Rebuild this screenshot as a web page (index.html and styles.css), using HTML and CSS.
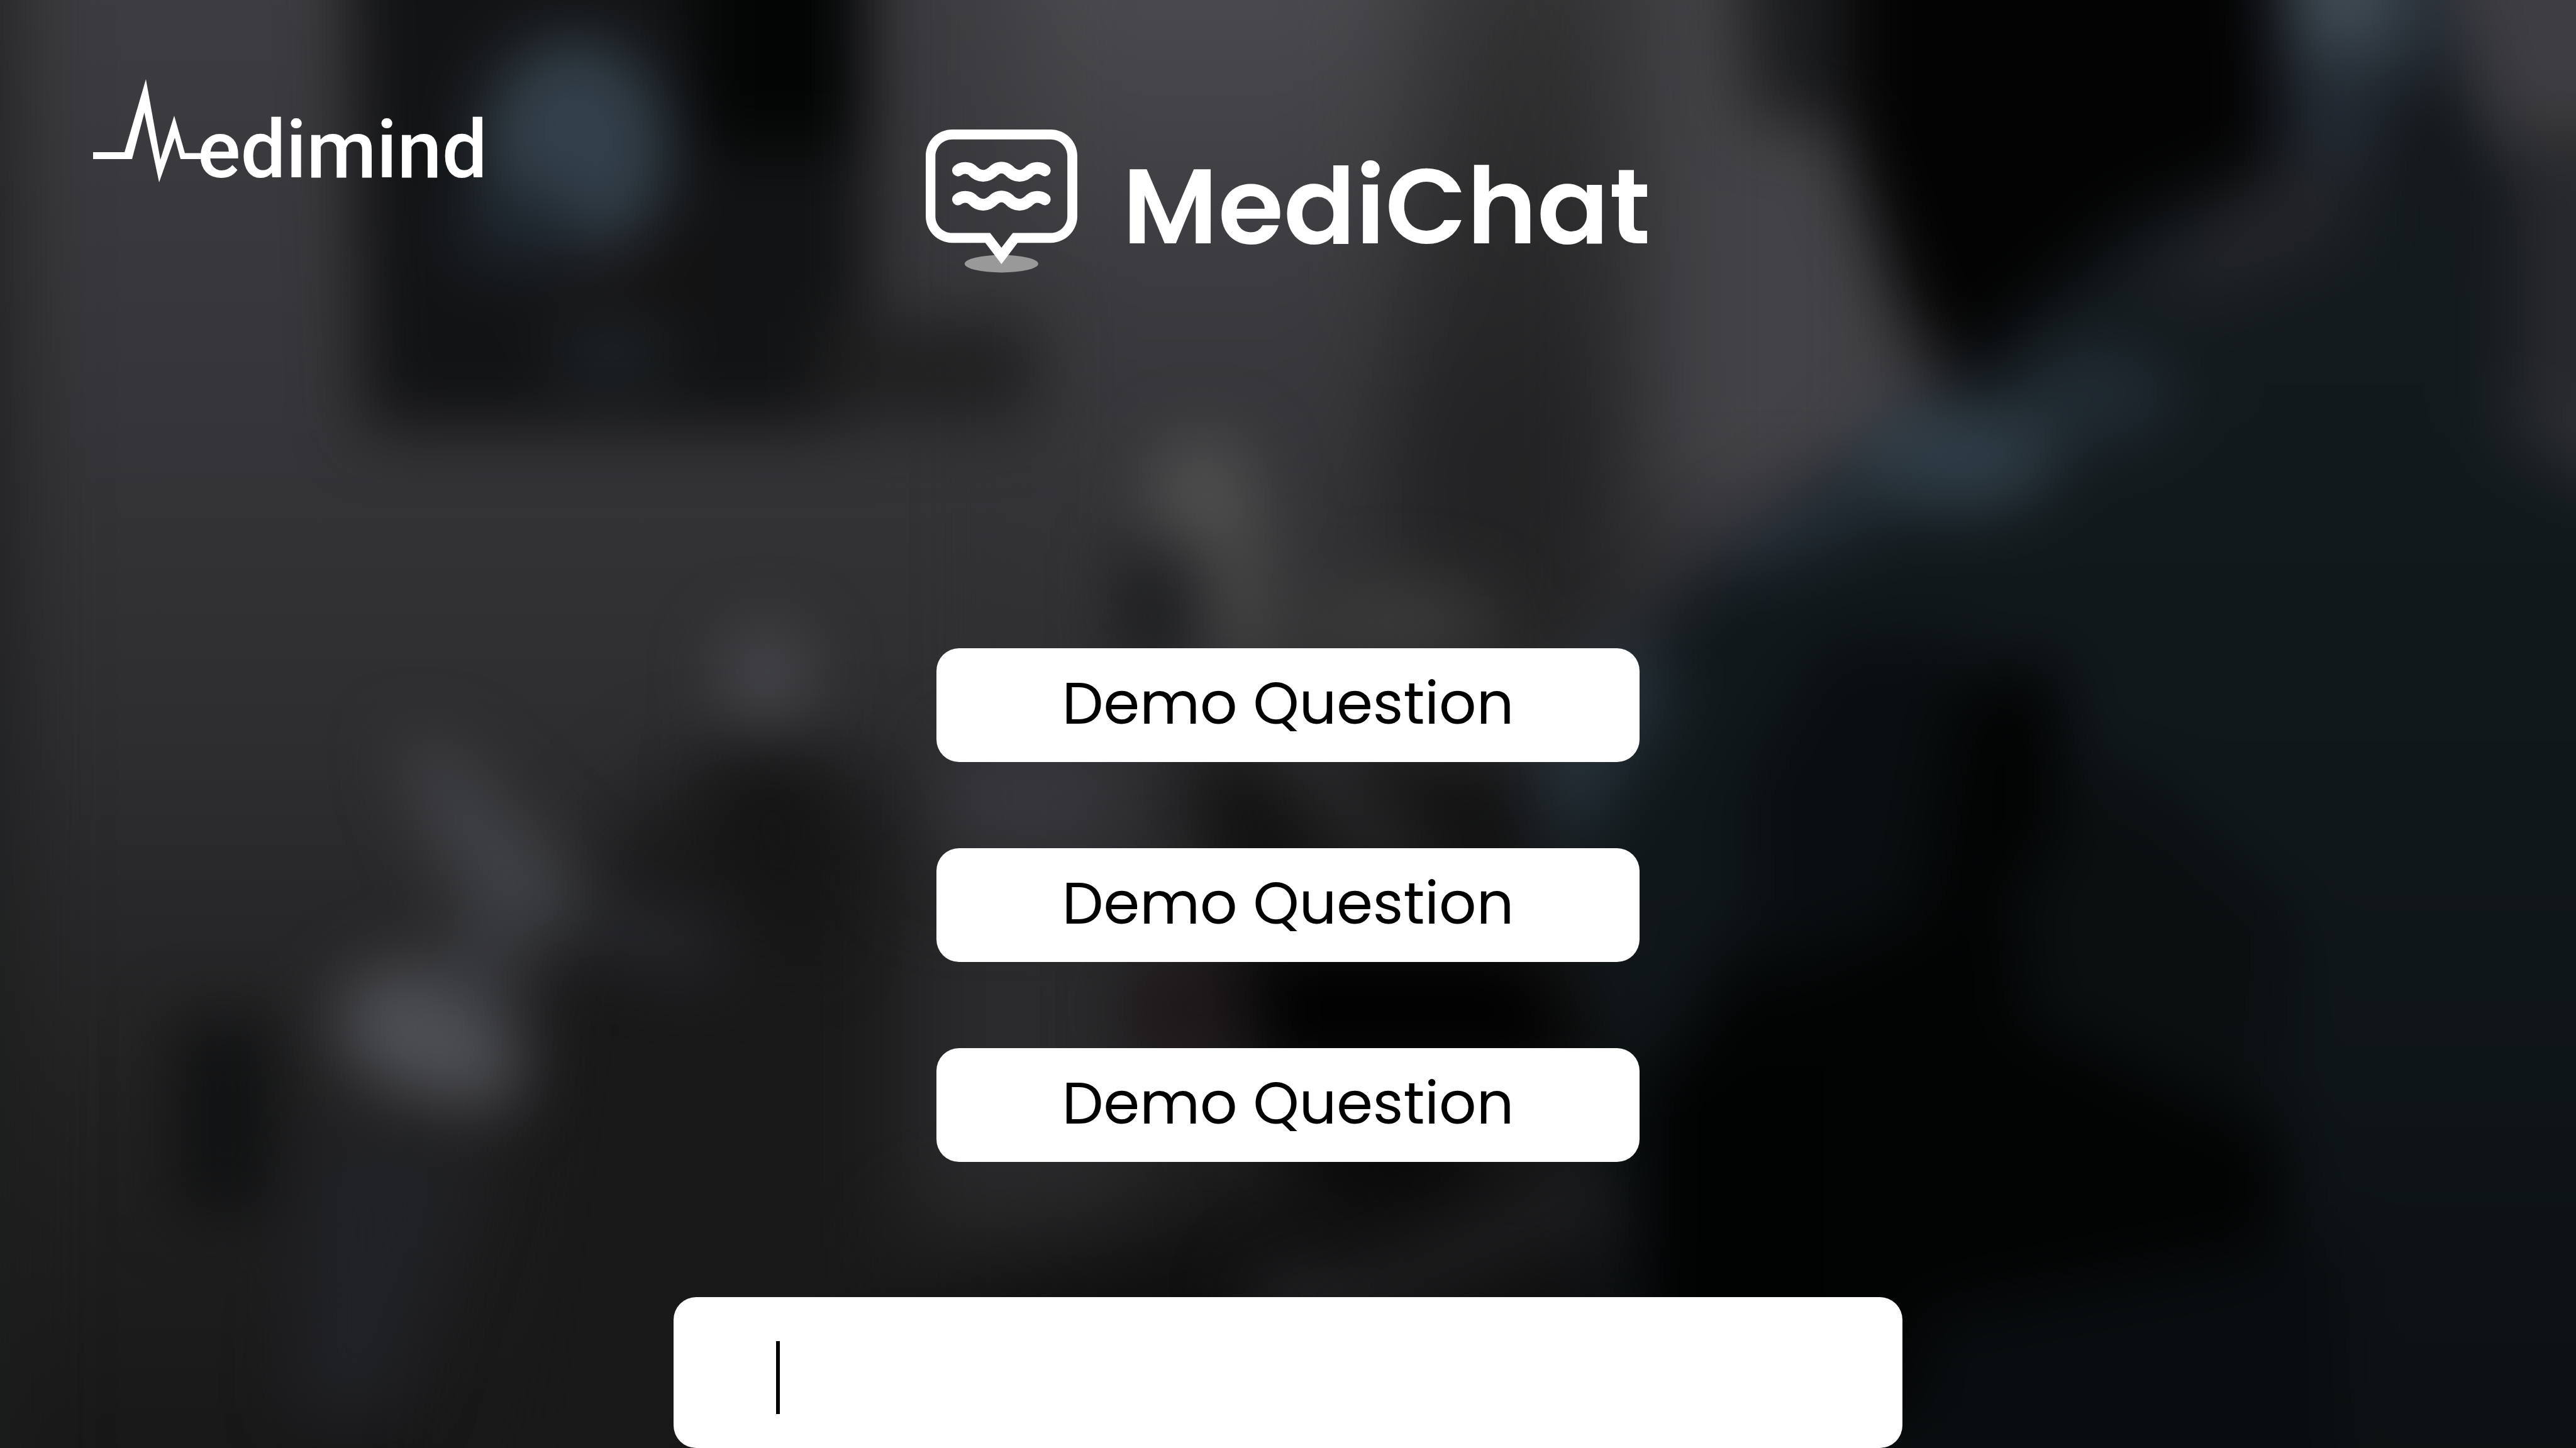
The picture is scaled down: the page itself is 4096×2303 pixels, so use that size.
FILE: index.html
```html
<!DOCTYPE html>
<html lang="en">
<head>
<meta charset="utf-8">
<meta name="viewport" content="width=device-width, initial-scale=1">
<title>MediChat</title>
<link rel="stylesheet" href="styles.css">
</head>
<body>
<svg class="backdrop" viewBox="0 0 1568 882" preserveAspectRatio="xMidYMid slice" aria-hidden="true">
  <defs>
    <linearGradient id="wall" x1="0" y1="0" x2="0" y2="1">
      <stop offset="0" stop-color="#3d3c40"/>
      <stop offset=".3" stop-color="#353438"/>
      <stop offset=".5" stop-color="#2e2e31"/>
      <stop offset=".75" stop-color="#222223"/>
      <stop offset="1" stop-color="#181819"/>
    </linearGradient>
    <linearGradient id="pillar" x1="0" y1="0" x2="0" y2="1">
      <stop offset="0" stop-color="#4e4d51"/>
      <stop offset=".5" stop-color="#3a393d"/>
      <stop offset="1" stop-color="#2e2e31"/>
    </linearGradient>
    <linearGradient id="door" x1="0" y1="0" x2="0" y2="1">
      <stop offset="0" stop-color="#363637"/>
      <stop offset=".7" stop-color="#222224"/>
      <stop offset="1" stop-color="#262627"/>
    </linearGradient>
    <linearGradient id="coat" x1="0" y1="0" x2="0" y2="1">
      <stop offset="0" stop-color="#141b1e"/>
      <stop offset=".5" stop-color="#10171a"/>
      <stop offset="1" stop-color="#0b1011"/>
    </linearGradient>
    <filter id="soft" x="-10%" y="-10%" width="120%" height="120%" color-interpolation-filters="sRGB"><feGaussianBlur stdDeviation="20"/></filter>
    <filter id="softer" x="-10%" y="-10%" width="120%" height="120%" color-interpolation-filters="sRGB"><feGaussianBlur stdDeviation="28"/></filter>
  </defs>
  <rect width="1568" height="882" fill="url(#wall)"/>
  <g filter="url(#softer)">
    <rect x="-60" y="-60" width="64" height="1000" fill="#1c1d1d"/>
    <rect x="620" y="-60" width="230" height="500" fill="url(#pillar)"/>
    <path d="M890-60H985V420H860L840 300Z" fill="url(#door)"/>
    <rect x="1010" y="-60" width="150" height="370" fill="#434246"/>
    <path d="M330 560L420 470H550V940H280Z" fill="#19191a"/>
    <rect x="550" y="540" width="140" height="200" fill="#2a2a2c"/>
    <path d="M560 800L900 690L1010 720V940H380Z" fill="#0f0f10"/>
  </g>
  <g filter="url(#soft)">
    <path d="M210-60H530V160L525 262H222Z" fill="#121314"/>
    <rect x="500" y="195" width="130" height="62" fill="#202021"/>
    <rect x="425" y="-60" width="98" height="150" fill="#030404"/>
    <ellipse cx="350" cy="90" rx="58" ry="68" fill="#33404a"/>
    <ellipse cx="315" cy="140" rx="42" ry="26" fill="#1d252d"/>
    <ellipse cx="385" cy="168" rx="50" ry="16" fill="#151213"/>
    <ellipse cx="372" cy="215" rx="38" ry="22" fill="#1e2427"/>
    <path d="M1470-60H1640V310H1545L1505 150L1480 40Z" fill="#3e3d41"/>
    <path d="M1530 80H1640V270H1540Z" fill="#28292c"/>
    <path d="M1380-60H1480L1510 60L1500 220H1340Z" fill="#232a33"/>
    <path d="M1388-60H1460V30H1395Z" fill="#404c55"/>
    <path d="M1450 70L1490 30L1530 110L1535 240H1440Z" fill="#12171a"/>
    <path d="M1180 240L1260 150L1380 90L1500 130L1535 270L1640 310V960H1000L960 640L930 560L905 500L995 395L1060 325Z" fill="url(#coat)"/>
    <path d="M1300 170L1390 100L1430 100L1430 150L1340 185Z" fill="#232428"/>
    <path d="M1055-60H1150V75H1068Z" fill="#1c1d1f"/>
    <path d="M1125-40H1386V100L1300 135L1220 205L1190 232L1160 190L1125 90Z" fill="#030303"/>
    <ellipse cx="1190" cy="278" rx="62" ry="32" fill="#303e48"/>
    <ellipse cx="1275" cy="240" rx="50" ry="32" fill="#202a32"/>
    <path d="M1040 335L1130 295L1150 315L1060 350Z" fill="#2a3540"/>
    <path d="M1180 420L1250 400L1260 470L1230 620L1390 680V770L1200 830L1100 900H1010V660L1080 540Z" fill="#020303"/>
    <path d="M1060 480L1110 390L1200 385L1170 560L1070 600Z" fill="#090e10"/>
    <path d="M900 505L995 380L1020 420L950 530Z" fill="#26323a"/>
    <path d="M1220 550L1290 460L1400 560L1380 690L1250 630Z" fill="#0a0f10"/>
    <rect x="1000" y="650" width="110" height="280" fill="#010202"/>
    <path d="M1170 800L1430 750V960H1150Z" fill="#090d0f"/>
    <ellipse cx="732" cy="300" rx="32" ry="34" fill="#505050"/>
    <path d="M735 310H770V410H748Z" fill="#4a4b49"/>
    <rect x="683" y="335" width="38" height="75" fill="#1b1c1e"/>
    <ellipse cx="850" cy="378" rx="62" ry="24" fill="#3a3a39"/>
    <path d="M720 460H930L980 640L900 700H770L740 560Z" fill="#131313"/>
    <path d="M575 450H680V520H575Z" fill="#36363b"/>
    <path d="M765 455L830 525H880L800 455Z" fill="#2c2c2f"/>
    <ellipse cx="722" cy="615" rx="36" ry="34" fill="#1e1719"/>
    <path d="M765 580H930L970 650H770Z" fill="#010101"/>
    <ellipse cx="840" cy="708" rx="60" ry="14" fill="#020202"/>
    <path d="M780 790L960 705L995 740L830 810Z" fill="#1d1d1f"/>
    <ellipse cx="790" cy="788" rx="36" ry="14" fill="#29292c"/>
    <ellipse cx="466" cy="410" rx="28" ry="27" fill="#47484c"/>
    <path d="M430 465H500V590L450 540Z" fill="#151516"/>
    <path d="M240 450L275 455L350 530L370 560L310 575L265 520Z" fill="#404145"/>
    <path d="M350 540L430 560L440 595L340 575Z" fill="#28292d"/>
    <path d="M275 550L320 560L315 620H265Z" fill="#37383c"/>
    <path d="M208 600L250 585L320 640L310 675L240 665L208 640Z" fill="#4f5055"/>
    <rect x="108" y="620" width="58" height="120" fill="#101112"/>
    <path d="M190 690L290 700L240 860H180Z" fill="#212226"/>
  </g>
</svg>

<div class="page">
  <header class="top">
    <a class="logo" href="#" aria-label="Medimind">
      <svg class="logo-pulse" viewBox="0 0 174 164" aria-hidden="true"><path fill="#fff" d="M0 116H50L84 0L107 128L129 58L146 117.400H174V127H139L130 93L105 164L81.500 53L62 127H0Z"/></svg>
      <span class="logo-text">edimind</span>
    </a>
    <h1 class="title">
      <svg class="title-icon" viewBox="90 82 1005 950" aria-hidden="true">
        <ellipse cx="592" cy="972" rx="244" ry="58" fill="#999"/>
        <path fill="#fff" fill-rule="evenodd" d="M266 82H918C1016 82 1095 160 1095 258V656C1095 754 1016 833 918 833H699L592 974L485 833H266C168 833 90 754 90 656V258C90 160 168 82 266 82ZM266 147C204 147 154 197 154 259V656C154 718 204 768 266 768H517L592 866L667 768H918C980 768 1029 718 1029 656V259C1029 197 980 147 918 147Z"/>
        <path id="wave" fill="none" stroke="#fff" stroke-width="78" stroke-linecap="round" d="M304 353C330 331 374 331 399 353C442 400 499 400 543 353C572 328 612 328 641 353C684 400 739 400 783 353C809 331 852 331 879 353"/>
        <use href="#wave" y="192"/>
      </svg>
      <span>MediChat</span>
    </h1>
  </header>

  <main class="chat">
    <div class="prompts">
      <button class="prompt" type="button">Demo Question</button>
      <button class="prompt" type="button">Demo Question</button>
      <button class="prompt" type="button">Demo Question</button>
    </div>
    <label class="composer">
      <span class="caret" aria-hidden="true"></span>
      <input class="composer-input" type="text" aria-label="Ask a question">
    </label>
  </main>
</div>
</body>
</html>
```
FILE: styles.css
```css
* {
  box-sizing: border-box;
}

body {
  margin: 0;
  background: #1b1b1d;
  color: #fff;
  font-family: Poppins, Inter, "Open Sans", sans-serif;
}

.backdrop {
  position: fixed;
  inset: 0;
  z-index: -1;
  width: 100%;
  height: 100%;
}

.page {
  display: flex;
  flex-direction: column;
  min-height: 100vh;
}

.top {
  display: grid;
  grid-template-columns: 1fr auto 1fr;
  align-items: start;
  padding: 126px 148px 0;
}

.logo {
  display: flex;
  align-items: flex-end;
  color: #fff;
  text-decoration: none;
}

.logo-pulse {
  width: 174px;
  height: 164px;
}

.logo-text {
  margin-left: -8px;
  font: 500 128px/104px Roboto, sans-serif;
}

.title {
  display: flex;
  align-items: flex-start;
  gap: 72px;
  margin: 80px 0 0;
  font-size: 169px;
  font-weight: 600;
  line-height: 244px;
}

.title-icon {
  flex: none;
  width: 241px;
  height: 228px;
}

.chat {
  display: flex;
  flex: 1;
  flex-direction: column;
  align-items: center;
  padding-top: 581px;
}

.prompts {
  display: flex;
  flex-direction: column;
  gap: 137px;
  width: 100%;
  max-width: 1118px;
}

.prompt {
  height: 181px;
  padding: 0 0 6px;
  border: 0;
  border-radius: 36px;
  background: #fff;
  color: #000;
  font: inherit;
  font-size: 93px;
  line-height: 120px;
}

.composer {
  display: flex;
  align-items: center;
  width: 100%;
  max-width: 1954px;
  height: 240px;
  margin-top: auto;
  padding: 16px 163px 0;
  border-radius: 36px;
  background: #fff;
}

.caret {
  flex: none;
  width: 6px;
  height: 116px;
  background: #000;
}

.composer-input {
  flex: 1;
  min-width: 0;
  height: 120px;
  border: 0;
  outline: 0;
  background: transparent;
  color: #000;
  font: inherit;
  font-size: 93px;
}
```
